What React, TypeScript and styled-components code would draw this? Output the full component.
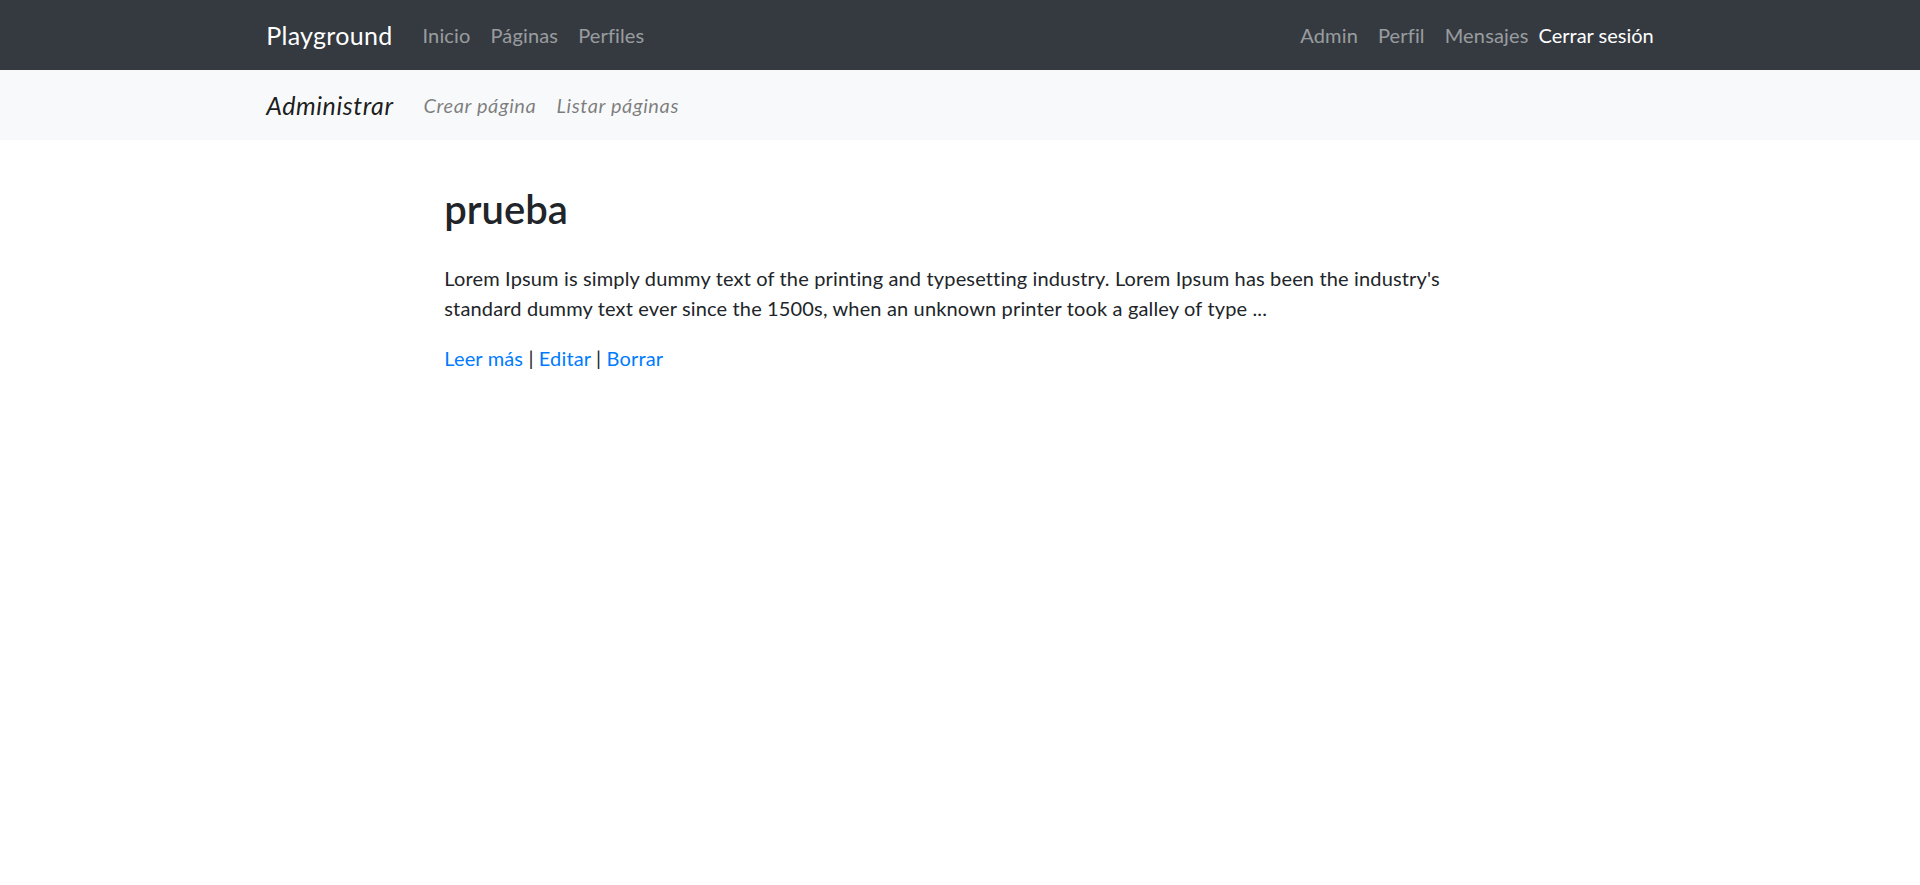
import { createGlobalStyle, styled } from "styled-components";

const GlobalStyle = createGlobalStyle`
  body {
    margin: 0;
    font-family: Lato, "Open Sans", sans-serif;
    color: #212529;
    background: #fff;
  }
`;

const Bar = styled.nav<{ $light?: boolean }>`
  height: 70px;
  background-color: ${(p) => (p.$light ? "#f8f9fa" : "#343a40")};
`;

const Container = styled.div`
  max-width: 1425px;
  height: 100%;
  margin: 0 auto;
  padding: 0 18.75px;
  box-sizing: border-box;
  display: flex;
  align-items: center;
`;

const Brand = styled.a<{ $light?: boolean }>`
  font-size: 25px;
  margin-right: 20px;
  color: ${(p) => (p.$light ? "rgba(0, 0, 0, 0.9)" : "#fff")};
  font-style: ${(p) => (p.$light ? "italic" : "normal")};
  letter-spacing: ${(p) => (p.$light ? "0.55px" : "0.3px")};
  text-decoration: none;
`;

const NavList = styled.div<{ $right?: boolean }>`
  display: flex;
  align-items: center;
  margin-left: ${(p) => (p.$right ? "auto" : "0")};
`;

const NavLink = styled.a<{ $light?: boolean }>`
  padding: 0 10px;
  font-size: 20px;
  color: ${(p) => (p.$light ? "rgba(0, 0, 0, 0.5)" : "rgba(255, 255, 255, 0.5)")};
  font-style: ${(p) => (p.$light ? "italic" : "normal")};
  letter-spacing: ${(p) => (p.$light ? "0.6px" : "0.15px")};
  text-decoration: none;
`;

const Logout = styled.a`
  font-size: 20px;
  color: #fff;
  text-decoration: none;
`;

const Main = styled.main`
  max-width: 1425px;
  margin: 0 auto;
`;

// col-md-9 mx-auto
const Post = styled.article`
  width: 1069px;
  margin: 0 auto;
  padding: 45px 18.75px 0;
  box-sizing: border-box;
`;

const Title = styled.h2`
  margin: 0 0 30px;
  font-size: 40px;
  line-height: 48px;
  font-weight: 600;
`;

const Excerpt = styled.p`
  margin: 0 0 20px;
  font-size: 20px;
  line-height: 30px;
  letter-spacing: 0.15px;
`;

const Actions = styled.p`
  margin: 0;
  font-size: 20px;
  line-height: 30px;
  letter-spacing: 0.15px;
`;

const Link = styled.a`
  color: #007bff;
  text-decoration: none;
`;

export default function App() {
  return (
    <>
      <GlobalStyle />
      <Bar>
        <Container>
          <Brand href="#">Playground</Brand>
          <NavList>
            <NavLink href="#">Inicio</NavLink>
            <NavLink href="#">Páginas</NavLink>
            <NavLink href="#">Perfiles</NavLink>
          </NavList>
          <NavList $right>
            <NavLink href="#">Admin</NavLink>
            <NavLink href="#">Perfil</NavLink>
            <NavLink href="#">Mensajes</NavLink>
            <Logout href="#">Cerrar sesión</Logout>
          </NavList>
        </Container>
      </Bar>
      <Bar $light>
        <Container>
          <Brand href="#" $light>Administrar</Brand>
          <NavList>
            <NavLink href="#" $light>Crear página</NavLink>
            <NavLink href="#" $light>Listar páginas</NavLink>
          </NavList>
        </Container>
      </Bar>
      <Main>
        <Post>
          <Title>prueba</Title>
          <Excerpt>
            Lorem Ipsum is simply dummy text of the printing and typesetting industry. Lorem Ipsum has been the
            industry's standard dummy text ever since the 1500s, when an unknown printer took a galley of type ...
          </Excerpt>
          <Actions>
            <Link href="#">Leer más</Link> | <Link href="#">Editar</Link> | <Link href="#">Borrar</Link>
          </Actions>
        </Post>
      </Main>
    </>
  );
}
